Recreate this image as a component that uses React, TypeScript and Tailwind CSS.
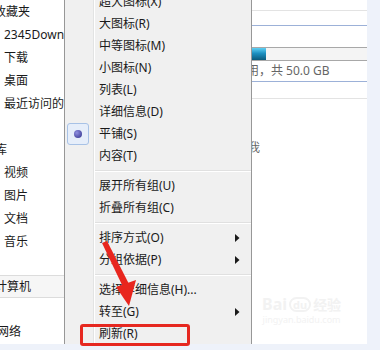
import React from "react";

const FONT = { fontFamily: '"Noto Sans", "Noto Sans CJK SC", sans-serif' };

type Item = { label: string; arrow?: boolean; radio?: boolean } | "sep";

const items: Item[] = [
  { label: "超大图标(X)" },
  { label: "大图标(R)" },
  { label: "中等图标(M)" },
  { label: "小图标(N)" },
  { label: "列表(L)" },
  { label: "详细信息(D)" },
  { label: "平铺(S)", radio: true },
  { label: "内容(T)" },
  "sep",
  { label: "展开所有组(U)" },
  { label: "折叠所有组(C)" },
  "sep",
  { label: "排序方式(O)", arrow: true },
  { label: "分组依据(P)", arrow: true },
  "sep",
  { label: "选择详细信息(H)..." },
  { label: "转至(G)", arrow: true },
  { label: "刷新(R)" },
];

function Arrow() {
  return (
    <svg width="5" height="8" viewBox="0 0 5 8">
      <path d="M0 0 L4.5 4 L0 8 Z" fill="#1a1a1a" />
    </svg>
  );
}

function Menu() {
  return (
    <div className="w-[188px] h-full bg-[#f0f0f0] border-l border-r border-[#979797] overflow-hidden text-[12px] text-[#1a1a1a]">
      <div className="flex flex-col mt-[-9px]">
        {items.map((it, i) =>
          it === "sep" ? (
            <div key={i} className="flex h-[8px]">
              <div className="w-[28px]" />
              <div className="w-px bg-[#e2e3e3]" />
              <div className="w-px bg-white" />
              <div className="flex-1 flex flex-col justify-center">
                <div className="h-px bg-[#e0e0e0]" />
                <div className="h-px bg-white" />
              </div>
            </div>
          ) : (
            <div key={i} className="flex h-[22px]">
              <div className="w-[28px] flex items-center">
                {it.radio && (
                  <div className="ml-[2px] w-[22px] h-[22px] rounded-[3px] border border-[#a8c2e6] bg-[#e6eefa] flex items-center justify-center">
                    <div className="w-[8px] h-[8px] rounded-full bg-[radial-gradient(circle_at_35%_35%,#8f8fe0,#2f2f8a)]" />
                  </div>
                )}
              </div>
              <div className="w-px bg-[#e2e3e3]" />
              <div className="w-px bg-white" />
              <div className="flex-1 flex items-center justify-between pl-[4px] pr-[11px] whitespace-nowrap">
                <span>{it.label}</span>
                {it.arrow && <Arrow />}
              </div>
            </div>
          )
        )}
      </div>
    </div>
  );
}

function LeftRow({ text, indent, className = "" }: { text?: string; indent: number; className?: string }) {
  return (
    <div className={"h-[23px] flex items-center whitespace-nowrap " + className}>
      {text && (
        <span style={{ marginLeft: indent }}>{text}</span>
      )}
    </div>
  );
}

function LeftPanel() {
  return (
    <div className="w-[64px] h-full bg-white overflow-hidden text-[12px] text-[#1a1a1a] flex flex-col">
      <LeftRow text="收藏夹" indent={-6} />
      <LeftRow text="2345Downloads" indent={4} />
      <LeftRow text="下载" indent={4} />
      <LeftRow text="桌面" indent={4} />
      <LeftRow text="最近访问的位置" indent={4} />
      <LeftRow indent={0} />
      <LeftRow text="库" indent={-5} />
      <LeftRow text="视频" indent={4} />
      <LeftRow text="图片" indent={4} />
      <LeftRow text="文档" indent={4} />
      <LeftRow text="音乐" indent={4} />
      <div className="h-[22px]" />
      <LeftRow text="计算机" indent={-5} className="border-y border-[#dcdcdc] bg-[#f6f6f6]" />
      <div className="h-[22px]" />
      <LeftRow text="网络" indent={-3} />
    </div>
  );
}

function RightPanel() {
  return (
    <div className="flex-1 h-full bg-white overflow-hidden flex flex-col text-[12px] text-[#666]">
      <div className="h-[10px]" />
      <div className="h-px bg-[#e3e3e3]" />
      <div className="h-[14px]" />
      <div className="h-px bg-[#9cb1d8]" />
      <div className="h-[21px]" />
      <div className="h-[14px] border-y border-[#a8a8a8] bg-[#f4f4f4] flex">
        <div className="w-[14px] h-full bg-[linear-gradient(#5fd0f4,#1b8fc0_45%,#0b5a7c)]" />
      </div>
      <div className="h-[20px] flex items-center whitespace-nowrap">
        <span className="ml-[-5px]">用，共 50.0 GB</span>
      </div>
      <div className="h-px bg-[#9cb1d8]" />
      <div className="h-[16px]" />
      <div className="h-px bg-[#e3e3e3]" />
      <div className="h-[41px]" />
      <div className="h-[16px] flex items-center whitespace-nowrap">
        <span className="ml-[-4px]">我</span>
      </div>
    </div>
  );
}

export default function App() {
  return (
    <div className="relative w-[380px] h-[350px] overflow-hidden bg-white" style={FONT}>
      <div className="flex h-[344px]">
        <LeftPanel />
        <Menu />
        <RightPanel />
        <div className="w-[13px] h-full bg-[#eef2fa]" />
      </div>
      <div className="h-[6px] bg-[#eef2fa]" />

      {/* Baidu watermark */}
      <div className="absolute left-[262px] top-[296px] flex flex-col items-center text-[#f2f2f2] pointer-events-none">
        <div className="flex items-end gap-[2px] text-[16px] font-bold leading-none">
          <span>Bai</span>
          <span className="border-2 border-[#f2f2f2] rounded-full px-[2px] text-[11px]">du</span>
          <span className="text-[14px]">经验</span>
        </div>
        <div className="text-[9px] leading-none mt-[3px]">jingyan.baidu.com</div>
      </div>

      {/* red highlight box */}
      <div className="absolute left-[80px] top-[324px] w-[110px] h-[22px] border-[3px] border-[#e62820] rounded-[3px]" />

      {/* red arrow */}
      <svg className="absolute left-0 top-0 pointer-events-none" width="380" height="350">
        <polygon points="102,243 107,241 129,284 123,287" fill="#e8261e" />
        <polygon points="116,287 136,280 129,306" fill="#e8261e" />
      </svg>
    </div>
  );
}
